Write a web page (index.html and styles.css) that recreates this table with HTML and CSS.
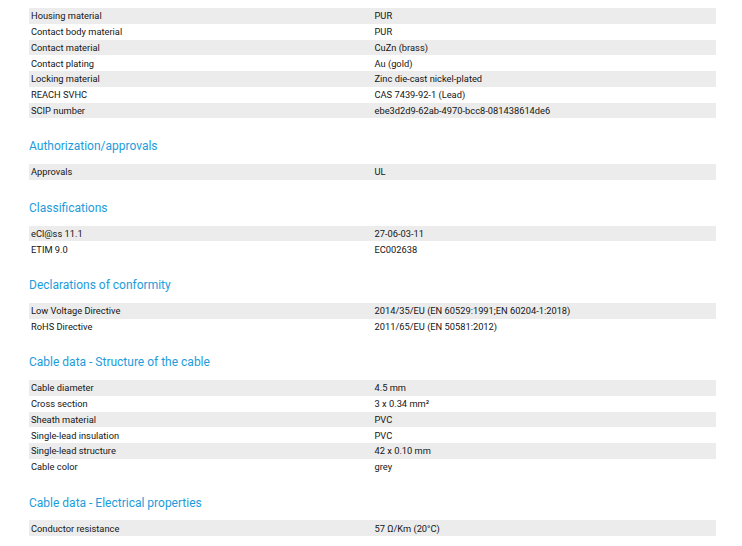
FILE: index.html
```html
<!DOCTYPE html>
<html lang="en">
<head>
<meta charset="utf-8">
<link rel="stylesheet" href="styles.css">
</head>
<body>
<div class="page">
  <div class="table">
    <div class="row"><span>Housing material</span><span>PUR</span></div>
    <div class="row"><span>Contact body material</span><span>PUR</span></div>
    <div class="row"><span>Contact material</span><span>CuZn (brass)</span></div>
    <div class="row"><span>Contact plating</span><span>Au (gold)</span></div>
    <div class="row"><span>Locking material</span><span>Zinc die-cast nickel-plated</span></div>
    <div class="row"><span>REACH SVHC</span><span>CAS 7439-92-1 (Lead)</span></div>
    <div class="row"><span>SCIP number</span><span>ebe3d2d9-62ab-4970-bcc8-081438614de6</span></div>
  </div>

  <h2 class="heading">Authorization/approvals</h2>
  <div class="table">
    <div class="row"><span>Approvals</span><span>UL</span></div>
  </div>

  <h2 class="heading">Classifications</h2>
  <div class="table">
    <div class="row"><span>eCl@ss 11.1</span><span>27-06-03-11</span></div>
    <div class="row"><span>ETIM 9.0</span><span>EC002638</span></div>
  </div>

  <h2 class="heading">Declarations of conformity</h2>
  <div class="table">
    <div class="row"><span>Low Voltage Directive</span><span>2014/35/EU (EN 60529:1991;EN 60204-1:2018)</span></div>
    <div class="row"><span>RoHS Directive</span><span>2011/65/EU (EN 50581:2012)</span></div>
  </div>

  <h2 class="heading">Cable data - Structure of the cable</h2>
  <div class="table">
    <div class="row"><span>Cable diameter</span><span>4.5 mm</span></div>
    <div class="row"><span>Cross section</span><span>3 x 0.34 mm²</span></div>
    <div class="row"><span>Sheath material</span><span>PVC</span></div>
    <div class="row"><span>Single-lead insulation</span><span>PVC</span></div>
    <div class="row"><span>Single-lead structure</span><span>42 x 0.10 mm</span></div>
    <div class="row"><span>Cable color</span><span>grey</span></div>
  </div>

  <h2 class="heading">Cable data - Electrical properties</h2>
  <div class="table">
    <div class="row"><span>Conductor resistance</span><span>57 Ω/Km (20°C)</span></div>
  </div>
</div>
</body>
</html>
```
FILE: styles.css
```css
html, body {
  margin: 0;
  padding: 0;
  background: #ffffff;
}
body {
  font-family: Roboto, "Liberation Sans", sans-serif;
  color: #151515;
}
.page {
  padding: 8px 0 0 29px;
  width: 687px;
}
.table {
  display: flex;
  flex-direction: column;
}
.row {
  display: grid;
  grid-template-columns: 1fr 1fr;
  height: 15.75px;
  align-items: center;
  font-size: 9.3px;
}
.row:nth-child(odd) {
  background: #ececec;
}
.row span {
  padding-left: 2px;
  white-space: nowrap;
}
.heading {
  margin: 20px 0 9.75px 0;
  height: 16px;
  line-height: 16px;
  font-size: 12px;
  font-weight: normal;
  color: #1c9cdb;
}
```
